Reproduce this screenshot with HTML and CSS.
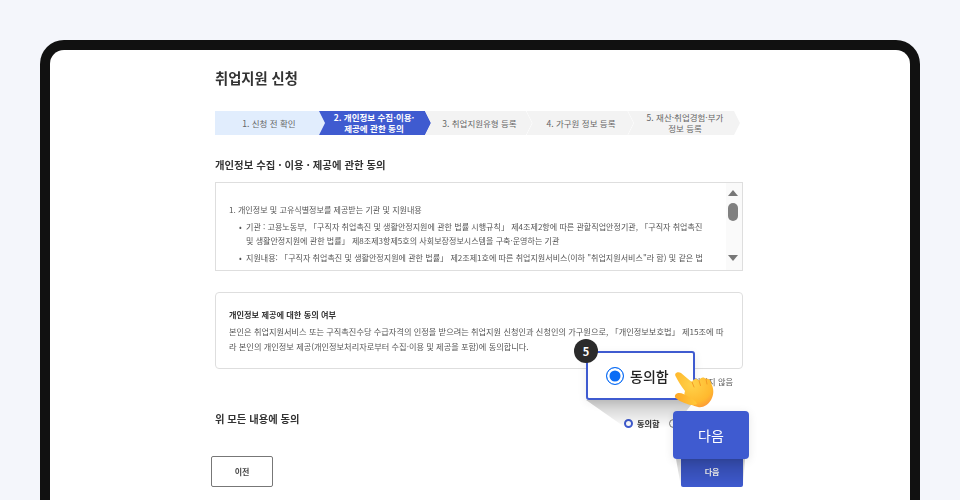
FILE: index.html
```html
<!DOCTYPE html>
<html lang="ko">
<head>
<meta charset="utf-8">
<title>취업지원 신청</title>
<link rel="stylesheet" href="styles.css">
</head>
<body>
<div class="page">
  <div class="frame">
    <main class="content">
      <h1 class="title">취업지원 신청</h1>
      <ol class="steps">
        <li class="step step-done">1. 신청 전 확인</li>
        <li class="step step-active">2. 개인정보 수집·이용·<br>제공에 관한 동의</li>
        <li class="step step-todo">3. 취업지원유형 등록</li>
        <li class="step step-todo">4. 가구원 정보 등록</li>
        <li class="step step-todo">5. 재산·취업경험·부가<br>정보 등록</li>
      </ol>
      <h2 class="section-title">개인정보 수집 · 이용 · 제공에 관한 동의</h2>
      <section class="terms">
        <div class="terms-text">
          <p class="terms-head">1. 개인정보 및 고유식별정보를 제공받는 기관 및 지원내용</p>
          <p class="terms-item"><span class="bullet">•</span>기관 : 고용노동부, 「구직자 취업촉진 및 생활안정지원에 관한 법률 시행규칙」 제4조제2항에 따른 관할직업안정기관, 「구직자 취업촉진</p>
          <p class="terms-cont">및 생활안정지원에 관한 법률」 제8조제3항제5호의 사회보장정보시스템을 구축·운영하는 기관</p>
          <p class="terms-item"><span class="bullet">•</span>지원내용: 「구직자 취업촉진 및 생활안정지원에 관한 법률」 제2조제1호에 따른 취업지원서비스(이하 "취업지원서비스"라 함) 및 같은 법</p>
        </div>
        <div class="scrollbar">
          <span class="arrow-up"></span>
          <span class="thumb"></span>
          <span class="arrow-down"></span>
        </div>
      </section>
      <section class="consent">
        <h3 class="consent-title">개인정보 제공에 대한 동의 여부</h3>
        <p class="consent-line">본인은 취업지원서비스 또는 구직촉진수당 수급자격의 인정을 받으려는 취업지원 신청인과 신청인의 가구원으로, 「개인정보보호법」 제15조에 따</p>
        <p class="consent-line">라 본인의 개인정보 제공(개인정보처리자로부터 수집·이용 및 제공을 포함)에 동의합니다.</p>
      </section>
      <div class="choice choice-upper">
        <span class="choice-label">동의하지 않음</span>
      </div>
      <div class="all-row">
        <span class="all-label">위 모든 내용에 동의</span>
        <div class="choice">
          <span class="radio radio-on"></span><span class="choice-label strong">동의함</span>
          <span class="radio"></span><span class="choice-label">동의하지 않음</span>
        </div>
      </div>
      <div class="actions">
        <button class="btn btn-prev">이전</button>
        <button class="btn btn-next">다음</button>
      </div>
    </main>
  </div>

  <svg class="cone" width="960" height="500" viewBox="0 0 960 500" aria-hidden="true">
    <defs>
      <linearGradient id="coneA" x1="0" y1="0" x2="0" y2="1">
        <stop offset="0" stop-color="#000" stop-opacity=".22"/>
        <stop offset="1" stop-color="#000" stop-opacity="0"/>
      </linearGradient>
    </defs>
    <polygon points="586,400 695,400 673,428 626,428" fill="url(#coneA)"/>
    <polygon points="676,459 745,459 743,487 681,487" fill="url(#coneA)"/>
  </svg>

  <div class="callout-radio">
    <span class="badge">5</span>
    <span class="big-radio"></span>
    <span class="callout-text">동의함</span>
  </div>
  <div class="callout-next">다음</div>

  <svg class="hand" width="48" height="46" viewBox="0 0 48 46" aria-hidden="true">
    <defs>
      <radialGradient id="skin" cx=".45" cy=".35" r=".8">
        <stop offset="0" stop-color="#ffd24a"/>
        <stop offset=".65" stop-color="#ffb92e"/>
        <stop offset="1" stop-color="#fb8a3c"/>
      </radialGradient>
      <linearGradient id="thumb" x1="0" y1="0" x2="1" y2="0">
        <stop offset="0" stop-color="#ffa726"/>
        <stop offset="1" stop-color="#ffc93a"/>
      </linearGradient>
    </defs>
    <path fill="url(#skin)" d="M2.500 5C1 2 5 0 8 2 12 5 16 9 19 11 20 7.500 24 7 26 9.500 27.500 6 31 5.500 33 8 36 7 38 10 38.500 13 41 18 41 24 38 29 35 34 30 37 25 36 20 35 16 33 13 29 11 26 11 23 12 20 8 15 5 10 2.500 5Z"/>
    <path fill="url(#thumb)" d="M4 22.500C7 21 12 23.500 16 26 20 28 23 30 24 33 21 35 17 34 13 32.500 9 31 3 28.500 2 26 1.500 24.500 2.500 23 4 22.500Z"/>
    <path fill="none" stroke="#f59b23" stroke-width="1" stroke-linecap="round" d="M19 11 21 16M26 9.500 27.500 14.500M33 8 34 13"/>
  </svg>
</div>
</body>
</html>
```

FILE: styles.css
```css
* { box-sizing: border-box; }
html, body { margin: 0; padding: 0; }
body {
  font-family: "Noto Sans CJK KR", "Noto Sans", sans-serif;
  color: #333;
}
.page {
  position: relative;
  width: 960px;
  height: 500px;
  overflow: hidden;
  background: #f4f6fb;
  padding: 40px 40px 0;
}
.frame {
  width: 880px;
  height: 480px;
  background: #fff;
  border: 10px solid #111;
  border-bottom: 0;
  border-radius: 24px 24px 0 0;
  overflow: hidden;
}
.content {
  width: 528px;
  margin-left: 165px;
  filter: blur(.45px);
}
.title {
  margin: 0;
  padding-top: 17px;
  height: 61px;
  font-size: 14.3px;
  line-height: 21px;
  font-weight: 700;
  color: #333;
}
.steps {
  list-style: none;
  margin: 0;
  padding: 0;
  display: flex;
  width: 526px;
  height: 24px;
}
.step {
  display: flex;
  align-items: center;
  justify-content: center;
  text-align: center;
  white-space: nowrap;
  font-size: 8.500px;
  line-height: 11px;
  flex: none;
  width: 107px;
  padding: 0 8px 0 6px;
  clip-path: polygon(0 0, calc(100% - 6px) 0, 100% 50%, calc(100% - 6px) 100%, 0 100%, 6px 50%);
  color: #666;
  background: #f3f3f3;
}
.step-done {
  width: 110px;
  background: #e1edfd;
  clip-path: polygon(0 0, calc(100% - 6px) 0, 100% 50%, calc(100% - 6px) 100%, 0 100%);
  margin-right: -6px;
}
.step-active {
  width: 112px;
  background: #3f5bd0;
  color: #fff;
  font-weight: 700;
  margin-right: -6px;
}
.step-todo { margin-right: -5.500px; padding: 0 6px 0 8px; }
.step:last-child { margin-right: 0; width: 112px; }
.section-title {
  margin: 23px 0 11px;
  font-size: 10.400px;
  line-height: 13px;
  font-weight: 700;
  color: #333;
}
.terms {
  display: flex;
  height: 89px;
  border: 1px solid #dedede;
  overflow: hidden;
}
.terms-text {
  flex: 1;
  padding: 19px 0 0 13px;
  font-size: 8.050px;
  color: #555;
  white-space: nowrap;
  overflow: hidden;
}
.terms-text p { margin: 0; line-height: 15px; }
.terms-head { height: 17px; }
.terms-item { padding-left: 10px; height: 14px; }
.terms-cont { padding-left: 17px; height: 17px; }
.bullet { display: inline-block; width: 7px; }
.scrollbar {
  flex: none;
  width: 16px;
  background: #fafafa;
  padding: 7px 0 0 2px;
  display: flex;
  flex-direction: column;
  align-items: flex-start;
}
.arrow-up, .arrow-down {
  width: 0;
  height: 0;
  border-left: 5px solid transparent;
  border-right: 5px solid transparent;
}
.arrow-up { border-bottom: 6px solid #777; }
.arrow-down { border-top: 6px solid #777; }
.thumb {
  width: 10px;
  height: 18px;
  border-radius: 5px;
  background: #808080;
  margin: 7px 0 34px;
}
.consent {
  margin-top: 21px;
  height: 77px;
  border: 1px solid #dedede;
  border-radius: 4px;
  padding: 15px 13px 0;
}
.consent-title {
  margin: 0 0 4px;
  font-size: 8.200px;
  line-height: 12px;
  font-weight: 700;
  color: #333;
}
.consent-line {
  margin: 0;
  font-size: 8.200px;
  line-height: 15px;
  color: #555;
  white-space: nowrap;
}
.choice {
  display: flex;
  align-items: center;
  font-size: 8.200px;
  color: #555;
}
.choice-upper {
  justify-content: flex-end;
  height: 24px;
  padding-right: 10px;
}
.choice-label.strong { font-weight: 700; color: #333; margin-right: 9px; }
.radio {
  width: 9px;
  height: 9px;
  border-radius: 50%;
  border: 1px solid #777;
  background: #fff;
  margin-right: 4px;
}
.radio-on {
  border: 2.500px solid #3f5bd0;
}
.all-row {
  display: flex;
  justify-content: space-between;
  align-items: center;
  height: 30px;
  margin-top: 15px;
  padding-right: 14px;
}
.all-label {
  font-size: 10.300px;
  font-weight: 700;
  color: #333;
  position: relative;
  top: -5px;
}
.actions {
  display: flex;
  justify-content: space-between;
  margin: 18px 0 0 -4px;
}
.btn {
  height: 31px;
  font-family: inherit;
  font-size: 8px;
  font-weight: 700;
  border-radius: 2px;
  padding: 0;
}
.btn-prev {
  width: 62px;
  background: #fff;
  border: 1px solid #777;
  color: #444;
}
.btn-next {
  width: 62px;
  background: #3f5bd0;
  border: 0;
  color: #fff;
}
.cone {
  position: absolute;
  left: 0;
  top: 0;
}
.callout-radio {
  position: absolute;
  left: 586px;
  top: 351px;
  width: 109px;
  height: 49px;
  background: #fff;
  border: 2px solid #3f5bd0;
  border-radius: 3px;
  display: flex;
  align-items: center;
  padding-left: 18px;
  box-shadow: 0 3px 10px rgba(0,0,0,.08);
}
.badge {
  position: absolute;
  left: -14px;
  top: -14px;
  width: 24px;
  height: 24px;
  border-radius: 50%;
  background: #2b2b2b;
  color: #fff;
  font-size: 11px;
  font-weight: 700;
  line-height: 24px;
  text-align: center;
}
.big-radio {
  width: 18px;
  height: 18px;
  border-radius: 50%;
  background: #0a6cf5;
  border: 1.500px solid #0a6cf5;
  box-shadow: inset 0 0 0 2.500px #fff;
  margin-right: 6px;
}
.callout-text {
  font-size: 14px;
  font-weight: 500;
  color: #222;
}
.callout-next {
  position: absolute;
  left: 673px;
  top: 411px;
  width: 76px;
  height: 48px;
  background: #3f5bd0;
  border-radius: 4px;
  color: #fff;
  font-size: 14px;
  font-weight: 400;
  line-height: 48px;
  text-align: center;
  box-shadow: 0 2px 10px rgba(0,0,0,.1);
}
.hand {
  position: absolute;
  left: 673px;
  top: 371px;
}
```
